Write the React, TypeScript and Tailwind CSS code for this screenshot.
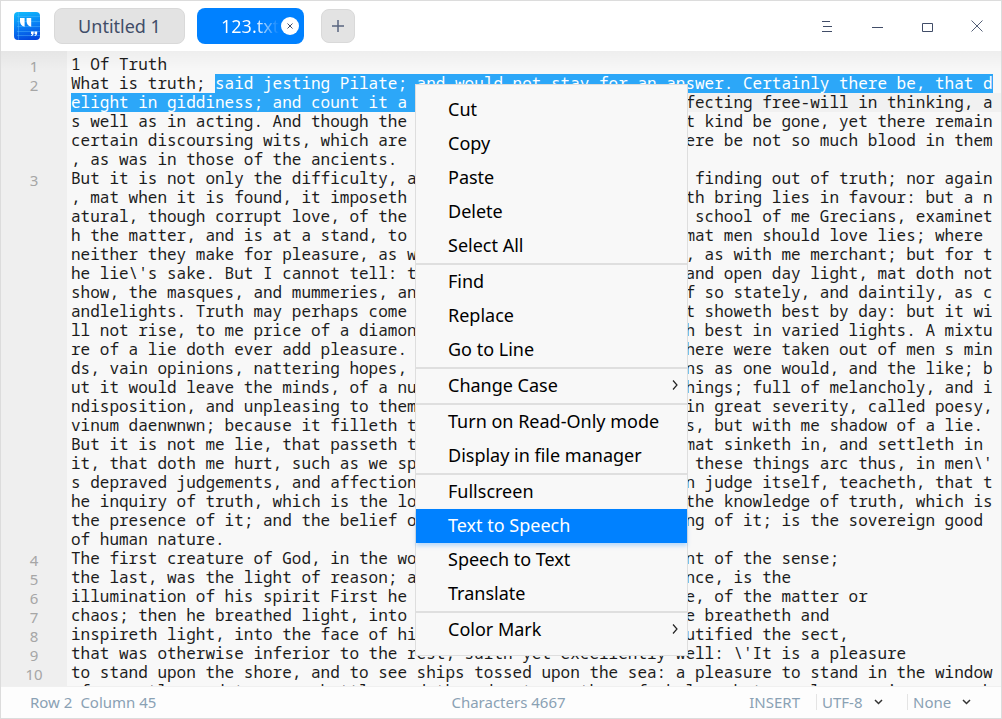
import React from "react";

type Row = { no?: number; text: string; tail?: string };

const TAIL_COLUMN = 64;

const rows: Row[] = [
  { no: 1, text: "1 Of Truth" },
  { no: 2, text: "What is truth; said jesting Pilate; and would not stay for an answer. Certainly there be, that d" },
  { text: "elight in giddiness; and count it a ", tail: "fecting free-will in thinking, a" },
  { text: "s well as in acting. And though the", tail: "t kind be gone, yet there remain" },
  { text: "certain discoursing wits, which are", tail: "ere be not so much blood in them" },
  { text: ", as was in those of the ancients." },
  { no: 3, text: "But it is not only the difficulty, a", tail: " finding out of truth; nor again" },
  { text: ", mat when it is found, it imposeth", tail: "th bring lies in favour: but a n" },
  { text: "atural, though corrupt love, of the", tail: " school of me Grecians, examinet" },
  { text: "h the matter, and is at a stand, to", tail: "mat men should love lies; where" },
  { text: "neither they make for pleasure, as w", tail: ", as with me merchant; but for t" },
  { text: "he lie\\'s sake. But I cannot tell: t", tail: "and open day light, mat doth not" },
  { text: "show, the masques, and mummeries, an", tail: "f so stately, and daintily, as c" },
  { text: "andlelights. Truth may perhaps come", tail: "t showeth best by day: but it wi" },
  { text: "ll not rise, to me price of a diamon", tail: "h best in varied lights. A mixtu" },
  { text: "re of a lie doth ever add pleasure.", tail: "here were taken out of men s min" },
  { text: "ds, vain opinions, nattering hopes,", tail: "ns as one would, and the like; b" },
  { text: "ut it would leave the minds, of a nu", tail: "hings; full of melancholy, and i" },
  { text: "ndisposition, and unpleasing to them", tail: "in great severity, called poesy," },
  { text: "vinum daenwnwn; because it filleth t", tail: "s, but with me shadow of a lie." },
  { text: "But it is not me lie, that passeth t", tail: "mat sinketh in, and settleth in" },
  { text: "it, that doth me hurt, such as we sp", tail: " these things arc thus, in men\\'" },
  { text: "s depraved judgements, and affection", tail: "n judge itself, teacheth, that t" },
  { text: "he inquiry of truth, which is the lo", tail: "the knowledge of truth, which is" },
  { text: "the presence of it; and the belief o", tail: "ng of it; is the sovereign good" },
  { text: "of human nature." },
  { no: 4, text: "The first creature of God, in the wo", tail: "nt of the sense;" },
  { no: 5, text: "the last, was the light of reason; a", tail: "nce, is the" },
  { no: 6, text: "illumination of his spirit First he", tail: "e, of the matter or" },
  { no: 7, text: "chaos; then he breathed light, into", tail: "e breatheth and" },
  { no: 8, text: "inspireth light, into the face of hi", tail: "utified the sect," },
  { no: 9, text: "that was otherwise inferior to the rest, saith yet excellently well: \\'It is a pleasure" },
  { no: 10, text: "to stand upon the shore, and to see ships tossed upon the sea: a pleasure to stand in the window" },
  { text: "of a castle, and to see a battle, and the adventures thereof, below: but no pleasure is comparab" },
];

const menuGroups: { label: string; submenu?: boolean; active?: boolean }[][] = [
  [{ label: "Cut" }, { label: "Copy" }, { label: "Paste" }, { label: "Delete" }, { label: "Select All" }],
  [{ label: "Find" }, { label: "Replace" }, { label: "Go to Line" }],
  [{ label: "Change Case", submenu: true }],
  [{ label: "Turn on Read-Only mode" }, { label: "Display in file manager" }],
  [{ label: "Fullscreen" }, { label: "Text to Speech", active: true }, { label: "Speech to Text" }, { label: "Translate" }],
  [{ label: "Color Mark", submenu: true }],
];

function Logo() {
  return (
    <svg width="26" height="28" viewBox="0 0 26 28" aria-hidden="true">
      <defs>
        <linearGradient id="logo" x1="0.5" y1="0" x2="0.7" y2="1">
          <stop offset="0" stopColor="#0fb4fb" />
          <stop offset="0.5" stopColor="#087bf3" />
          <stop offset="1" stopColor="#0344dc" />
        </linearGradient>
      </defs>
      <rect width="26" height="28" rx="4" fill="url(#logo)" />
      <path d="M3 4.500h23M3 9.500h23M3 14.500h23M3 19.500h23M3 23.500h23M4.500 0v28" stroke="#5cc0ff" strokeOpacity="0.4" />
      <path
        fill="#fff"
        d="M6 6h4.600v8.800C7.400 14.300 6 12 6 9zM12.600 6h4.600v8.800c-3.200-.5-4.600-2.800-4.600-5.800zM17 19.500h2.700v1.600c0 1.600-.9 2.700-2.500 3v-1c.6-.2.9-.6 1-1.100H17zM20.500 19.500h2.700v1.600c0 1.600-.9 2.700-2.500 3v-1c.6-.2.9-.6 1-1.100h-1.200z"
      />
    </svg>
  );
}

function TitleBar() {
  const win = "grid size-[50px] place-items-center text-[#414d68]";
  return (
    <header className="flex h-[50px] shrink-0 items-center bg-white pl-[13px]">
      <Logo />
      <div className="ml-[14px] flex items-center" role="tablist">
        <button role="tab" aria-selected="false" className="h-9 w-[131px] rounded-lg border border-[#d9d9d9] bg-[#e3e3e3] text-lg text-[#414d68]">
          Untitled 1
        </button>
        <div className="relative ml-3 flex h-9 w-[107px] items-center overflow-hidden rounded-lg bg-[#0081ff]">
          <button role="tab" aria-selected="true" className="h-9 bg-linear-to-r from-white from-70% to-white/0 to-100% bg-clip-text pl-6 text-lg text-transparent">
            123.txt
          </button>
          <button aria-label="Close tab" className="absolute right-[5px] grid size-[18px] place-items-center rounded-full bg-white">
            <svg width="8" height="8" viewBox="0 0 8 8" stroke="#414d68" aria-hidden="true">
              <path d="M1.500 1.500l5 5M6.500 1.500l-5 5" />
            </svg>
          </button>
        </div>
        <button aria-label="New tab" className="ml-[17px] grid size-[34px] place-items-center rounded-lg border border-[#d9d9d9] bg-[#e3e3e3]">
          <svg width="12" height="12" viewBox="0 0 12 12" stroke="#5a6580" strokeWidth="1.500" aria-hidden="true">
            <path d="M6 0v12M0 6h12" />
          </svg>
        </button>
      </div>
      <div className="-mr-px ml-auto flex">
        <button aria-label="Menu" className={win}>
          <svg width="11" height="11" viewBox="0 0 11 11" stroke="currentColor" aria-hidden="true">
            <path d="M0 0.500h8M1 5.500h9M0 10.500h10" />
          </svg>
        </button>
        <button aria-label="Minimize" className={win}>
          <svg width="11" height="11" viewBox="0 0 11 11" stroke="currentColor" aria-hidden="true">
            <path d="M0 6.500h11" />
          </svg>
        </button>
        <button aria-label="Maximize" className={win}>
          <svg width="11" height="11" viewBox="0 0 11 11" fill="none" stroke="currentColor" aria-hidden="true">
            <path d="M0.500 2.500h10v8h-10z" />
          </svg>
        </button>
        <button aria-label="Close" className={win}>
          <svg width="12" height="12" viewBox="0 0 12 12" stroke="currentColor" strokeWidth="0.900" aria-hidden="true">
            <path d="M0.500 0.500l11 11M11.500 0.500l-11 11" />
          </svg>
        </button>
      </div>
    </header>
  );
}

function Editor() {
  return (
    <main className="relative flex min-h-0 flex-1 overflow-hidden bg-[#f8f8f8]">
      <div className="w-[66px] shrink-0 bg-[#efefef] pt-[6px] text-center text-[15px] leading-[19px] text-[#a6a6a6]" aria-hidden="true">
        {rows.map((row, i) => (
          <div key={i} className="h-[19px]">{row.no}</div>
        ))}
      </div>
      <div
        role="textbox"
        aria-multiline="true"
        aria-label="Document text"
        className="min-w-0 flex-1 overflow-hidden pt-[4px] pl-1 font-['Noto_Sans_Mono','DejaVu_Sans_Mono',monospace] text-base leading-[19px] whitespace-pre text-[#1c1c1c]"
      >
        {rows.map((row, i) => {
          const text = row.tail ? row.text.padEnd(TAIL_COLUMN) + row.tail : row.text;
          if (i === 1)
            return (
              <div key={i} className="flex h-[19px]">
                {text.slice(0, 15)}
                <mark className="bg-[#2ca7f8] text-white">{text.slice(15)}</mark>
              </div>
            );
          if (i === 2)
            return (
              <div key={i} className="flex h-[19px] bg-[#f1f1f1]">
                <mark className="bg-[#2ca7f8] text-white">{text.slice(0, 61)}</mark>
                {text.slice(61)}
              </div>
            );
          return <div key={i} className="h-[19px]">{text}</div>;
        })}
      </div>
      <div className="pointer-events-none absolute inset-x-0 top-0 h-5 bg-linear-to-b from-black/4 to-transparent" />
    </main>
  );
}

function ContextMenu() {
  return (
    <div role="menu" className="absolute top-[83px] left-[414px] w-[273px] border border-[#dedede] bg-[#f8f8f8] py-2 text-lg text-black">
      {menuGroups.map((group, g) => (
        <div key={g} role="group" className={g ? "border-t-2 border-[#dfdfdf]" : ""}>
          {group.map((item) => (
            <button
              key={item.label}
              role="menuitem"
              className={
                "flex h-[34px] w-full items-center justify-between pr-[9px] pb-[2px] pl-8 text-left " +
                (item.active ? "bg-[#0081ff] text-white shadow-[0_3px_4px_rgba(0,129,255,0.25)]" : "")
              }
            >
              {item.label}
              {item.submenu && (
                <svg width="6" height="10" viewBox="0 0 6 10" fill="none" stroke="#222" strokeWidth="1.200" aria-hidden="true">
                  <path d="M1 0.500l4 4.500-4 4.500" />
                </svg>
              )}
            </button>
          ))}
        </div>
      ))}
    </div>
  );
}

function StatusSelect({ label, value, width }: { label: string; value: string; width: string }) {
  return (
    <label className={"relative flex h-4 items-center border-l border-[#e4e4e4] pl-[5px] " + width}>
      <select aria-label={label} defaultValue={value} className="w-full appearance-none bg-transparent text-[15px] outline-none">
        <option>{value}</option>
      </select>
      <svg className="pointer-events-none absolute right-0" width="9" height="6" viewBox="0 0 9 6" fill="none" stroke="#333" strokeWidth="1.500" aria-hidden="true">
        <path d="M1 1l3.500 3.500L8 1" />
      </svg>
    </label>
  );
}

function StatusBar() {
  return (
    <footer className="grid h-8 shrink-0 grid-cols-3 items-center border-t border-[#f0f0f0] bg-[#fdfdfd] pr-[30px] pl-[29px] pb-px text-[15px] text-[#8aa1b4]">
      <div className="flex gap-2">
        <span>Row 2</span>
        <span>Column 45</span>
      </div>
      <span className="pl-4 text-center">Characters 4667</span>
      <div className="flex items-center justify-end">
        <span className="mr-4">INSERT</span>
        <StatusSelect label="Encoding" value="UTF-8" width="mr-6 w-[67px]" />
        <StatusSelect label="Highlighting" value="None" width="w-[64px]" />
      </div>
    </footer>
  );
}

export default function App() {
  return (
    <div className="relative flex h-screen flex-col overflow-hidden border border-[#dcdcdc] bg-white font-['Noto_Sans',sans-serif]">
      <TitleBar />
      <Editor />
      <StatusBar />
      <ContextMenu />
    </div>
  );
}
